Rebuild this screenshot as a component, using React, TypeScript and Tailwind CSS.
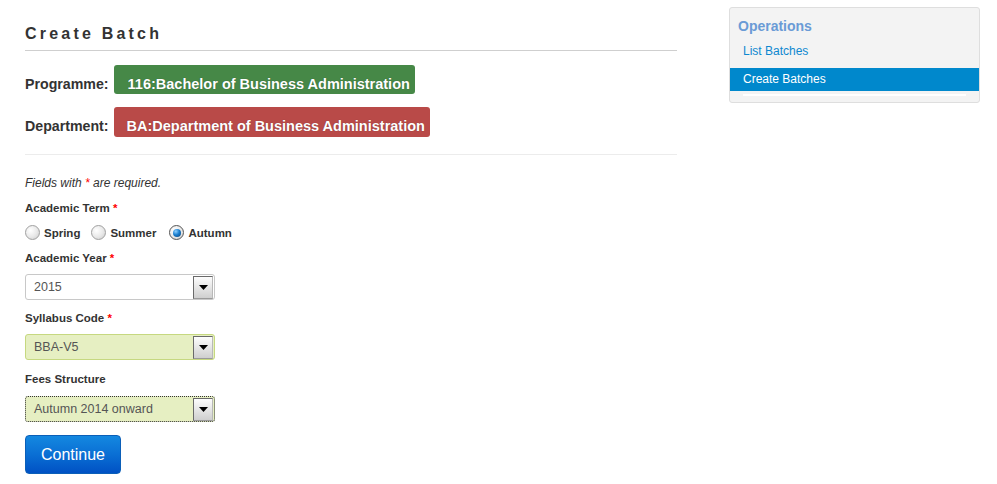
import React from "react";

const Req = () => <span className="text-[#ff0000]"> *</span>;

const Radio = ({ label, checked = false }: { label: string; checked?: boolean }) => (
  <label className="flex items-center gap-[4px]">
    <span
      className={`flex h-[15px] w-[15px] items-center justify-center rounded-full border ${
        checked ? "border-[#555]" : "border-[#a0a0a0]"
      } bg-[radial-gradient(circle_at_35%_35%,#ffffff_0%,#e8e8e8_55%,#c8c8c8_100%)]`}
    >
      {checked && (
        <span className="h-[8px] w-[8px] rounded-full bg-[radial-gradient(circle_at_35%_30%,#8fd0ff_0%,#1a7fd0_45%,#0b3f73_100%)]" />
      )}
    </span>
    <span className="text-[11.5px] font-bold leading-[16px] text-[#333]">{label}</span>
  </label>
);

const SelectBox = ({
  value,
  variant = "plain",
}: {
  value: string;
  variant?: "plain" | "success" | "focus";
}) => {
  const box =
    variant === "success"
      ? "border border-[#c6d880] bg-[#e6efc2]"
      : variant === "focus"
      ? "border border-dotted border-[#333] bg-[#e6efc2]"
      : "border border-[#c8c8c8] bg-white";
  return (
    <div className={`flex h-[26px] w-[190px] items-center rounded-[3px] ${box}`}>
      <span className="flex-1 pl-[8px] text-[12.5px] text-[#555]">{value}</span>
      <span className="mr-[1px] flex h-[23px] w-[20px] items-center justify-center border border-t-[#6a6a6a] border-l-[#6a6a6a] border-r-[#b8b8b8] border-b-[#9a9a9a] bg-[linear-gradient(180deg,#fdfdfd_0%,#e6e6e6_50%,#cfcfcf_100%)]">
        <svg width="9" height="5" viewBox="0 0 9 5">
          <path d="M0 0h9L4.5 5z" fill="#000" />
        </svg>
      </span>
    </div>
  );
};

export default function App() {
  return (
    <div className="flex min-h-[484px] bg-white font-['Liberation_Sans',Arial,sans-serif] text-[#333]">
      <div className="ml-[25px] w-[652px] pt-[24px]">
        <h2 className="border-b border-[#cfcfcf] pb-[6px] text-[16px] font-bold leading-[20px] tracking-[3.2px] text-[#333]">
          Create Batch
        </h2>

        <div className="mt-[14px] flex items-baseline">
          <span className="text-[14.2px] font-bold leading-[20px]">Programme:</span>
          <span className="ml-[5px] h-[29px] rounded-[3px] bg-[#468847] pl-[14px] pr-[5px] pt-[9px] text-[14.5px] font-bold leading-[20px] text-white [text-shadow:0_0_1px_rgba(0,0,0,0.35)]">
            116:Bachelor of Business Administration
          </span>
        </div>

        <div className="mt-[13px] flex items-baseline">
          <span className="text-[14.2px] font-bold leading-[20px]">Department:</span>
          <span className="ml-[5px] h-[30px] rounded-[3px] bg-[#b94a48] pl-[13px] pr-[5px] pt-[9px] text-[14.5px] font-bold leading-[20px] text-white [text-shadow:0_0_1px_rgba(0,0,0,0.35)]">
            BA:Department of Business Administration
          </span>
        </div>

        <div className="mt-[17px] h-px bg-[#ececec]" />

        <form>
          <p className="mt-[20px] text-[12px] italic leading-[16px] text-[#333]">
            Fields with <span className="text-[#ff0000]">*</span> are required.
          </p>

          <div className="mt-[9px] text-[11.5px] font-bold leading-[16px]">
            Academic Term<Req />
          </div>
          <div className="mt-[8px] flex h-[17px] items-center">
            <Radio label="Spring" />
            <span className="w-[11px]" />
            <Radio label="Summer" />
            <span className="w-[13px]" />
            <Radio label="Autumn" checked />
          </div>

          <div className="mt-[9px] text-[11.5px] font-bold leading-[16px]">
            Academic Year<Req />
          </div>
          <div className="mt-[8px]">
            <SelectBox value="2015" />
          </div>

          <div className="mt-[10px] text-[11.5px] font-bold leading-[16px]">
            Syllabus Code<Req />
          </div>
          <div className="mt-[8px]">
            <SelectBox value="BBA-V5" variant="success" />
          </div>

          <div className="mt-[11px] text-[11.5px] font-bold leading-[16px]">Fees Structure</div>
          <div className="mt-[9px]">
            <SelectBox value="Autumn 2014 onward" variant="focus" />
          </div>

          <button
            type="button"
            className="mt-[13px] h-[39px] w-[96px] rounded-[4px] border border-[#0b5fb8] bg-[linear-gradient(180deg,#1488e0_0%,#0a6fd4_50%,#0051c4_100%)] text-[16px] text-white"
          >
            Continue
          </button>
        </form>
      </div>

      <aside className="ml-[52px] mt-[7px] h-[96px] w-[251px] rounded-[3px] border border-[#dedede] bg-[#f3f3f3] pt-[9px]">
        <h3 className="pl-[8px] text-[14px] font-bold leading-[18px] text-[#6a9bd6]">Operations</h3>
        <ul className="mt-[8px]">
          <li className="pl-[13px] text-[12px] leading-[16px] text-[#0e88d0]">List Batches</li>
          <li className="mt-[9px] h-[23px] bg-[#0088cc] pl-[13px] text-[12px] leading-[23px] text-white">
            Create Batches
          </li>
        </ul>
        <div className="mx-[13px] mt-[3px] h-[2px] bg-white" />
      </aside>
    </div>
  );
}
